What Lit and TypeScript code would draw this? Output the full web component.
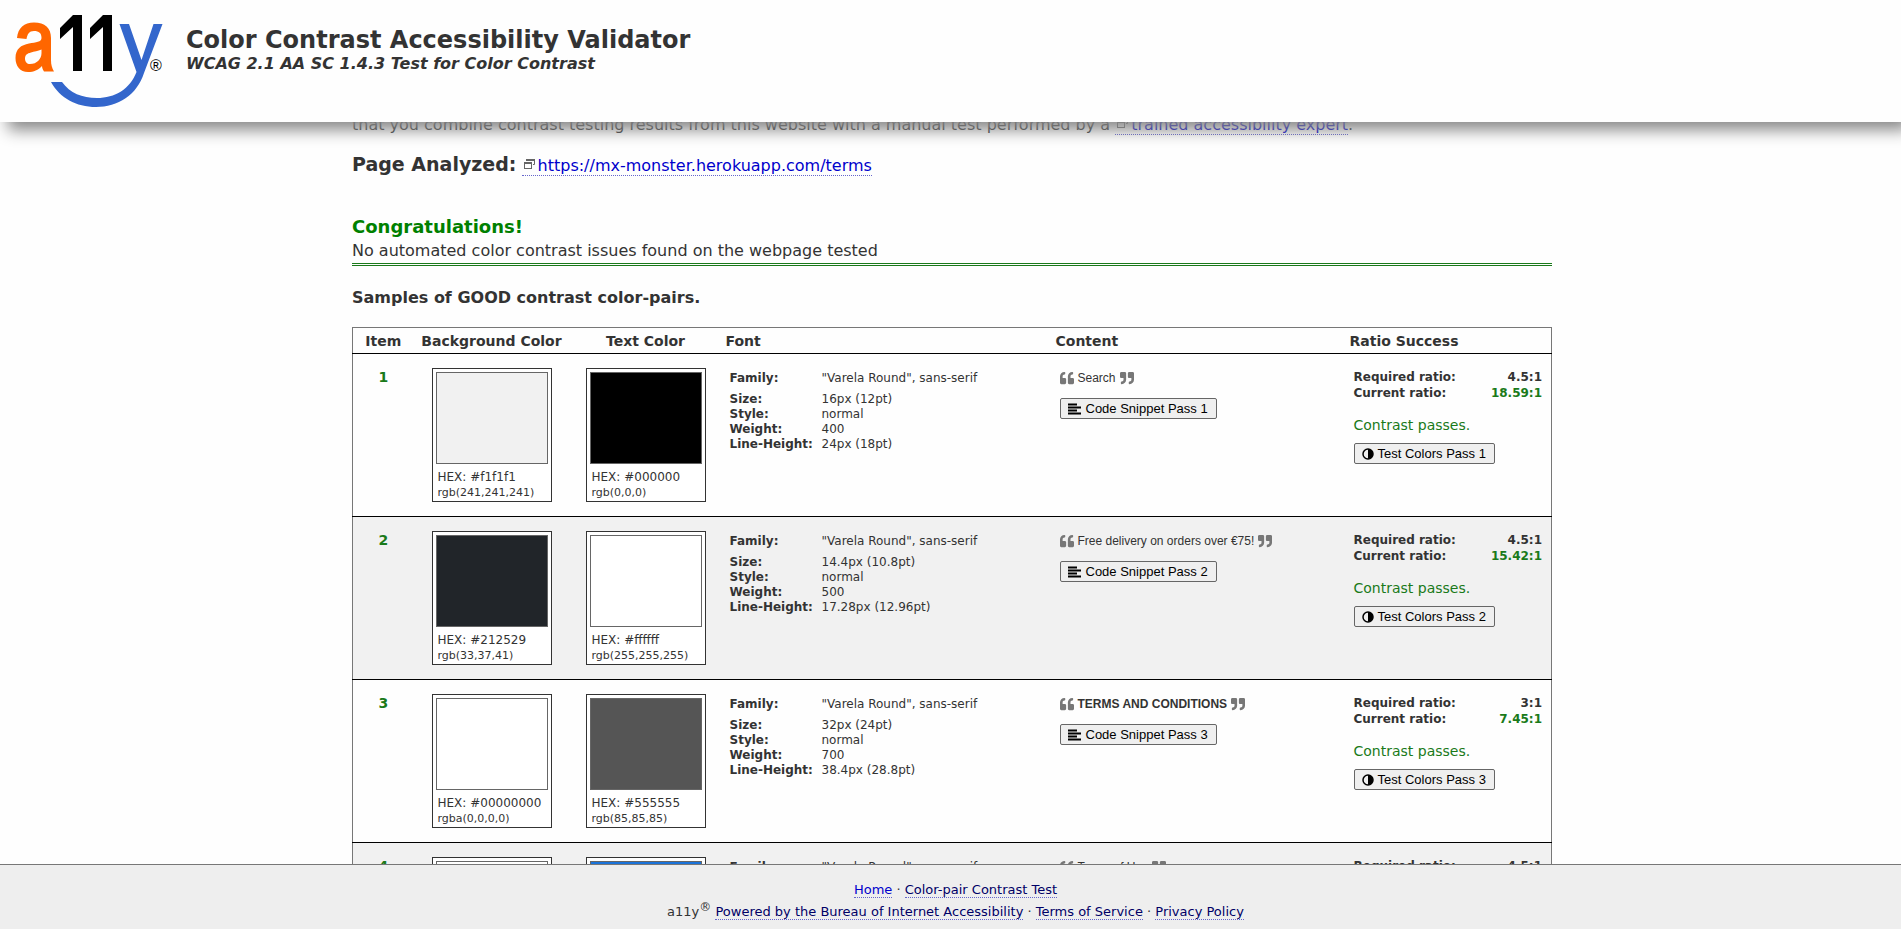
import { LitElement, html, css, svg } from "lit";
import { customElement } from "lit/decorators.js";
import { styleMap } from "lit/directives/style-map.js";

interface Swatch {
  hex: string;
  rgb: string;
  fill: string;
}

interface Sample {
  bg: Swatch;
  text: Swatch;
  size: string;
  weight: string;
  lineHeight: string;
  content: string;
  strong?: boolean;
  required: string;
  current: string;
}

const samples: Sample[] = [
  {
    bg: { hex: "#f1f1f1", rgb: "rgb(241,241,241)", fill: "#f1f1f1" },
    text: { hex: "#000000", rgb: "rgb(0,0,0)", fill: "#000000" },
    size: "16px (12pt)", weight: "400", lineHeight: "24px (18pt)",
    content: "Search", required: "4.5:1", current: "18.59:1",
  },
  {
    bg: { hex: "#212529", rgb: "rgb(33,37,41)", fill: "#212529" },
    text: { hex: "#ffffff", rgb: "rgb(255,255,255)", fill: "#ffffff" },
    size: "14.4px (10.8pt)", weight: "500", lineHeight: "17.28px (12.96pt)",
    content: "Free delivery on orders over €75!", required: "4.5:1", current: "15.42:1",
  },
  {
    bg: { hex: "#00000000", rgb: "rgba(0,0,0,0)", fill: "#ffffff" },
    text: { hex: "#555555", rgb: "rgb(85,85,85)", fill: "#555555" },
    size: "32px (24pt)", weight: "700", lineHeight: "38.4px (28.8pt)",
    content: "TERMS AND CONDITIONS", strong: true, required: "3:1", current: "7.45:1",
  },
  {
    bg: { hex: "#ffffff", rgb: "rgb(255,255,255)", fill: "#ffffff" },
    text: { hex: "#1a73d9", rgb: "rgb(26,115,217)", fill: "#1a73d9" },
    size: "16px (12pt)", weight: "400", lineHeight: "24px (18pt)",
    content: "Terms of Use", required: "4.5:1", current: "4.67:1",
  },
];

const quotePath = svg`<path d="M464 256h-80v-64c0-35.300 28.700-64 64-64h8c13.300 0 24-10.700 24-24V56c0-13.300-10.700-24-24-24h-8c-88.400 0-160 71.600-160 160v240c0 26.500 21.500 48 48 48h128c26.500 0 48-21.500 48-48V304c0-26.500-21.500-48-48-48zm-288 0H96v-64c0-35.300 28.700-64 64-64h8c13.300 0 24-10.700 24-24V56c0-13.300-10.700-24-24-24h-8C71.600 32 0 103.600 0 192v240c0 26.500 21.500 48 48 48h128c26.500 0 48-21.500 48-48V304c0-26.500-21.500-48-48-48z"/>`;

@customElement("app-root")
export class AppRoot extends LitElement {
  static styles = css`
    :host {
      display: block;
      height: 100vh;
      overflow: hidden;
      background: #fefefe;
      color: #333;
      font-family: Verdana, "DejaVu Sans", sans-serif;
      font-size: 16px;
    }
    .shell {
      display: flex;
      flex-direction: column;
      height: 100%;
    }
    .top {
      display: flex;
      align-items: flex-start;
      gap: 24px;
      height: 122px;
      box-sizing: border-box;
      flex: none;
      padding: 12px 15px;
      background: #fefefe;
      box-shadow: 8px 8px 15px 0 #888;
      z-index: 1;
    }
    .logo { width: 147px; height: 96px; flex: none; overflow: visible; }
    .reg { font: 16px "Liberation Sans", sans-serif; }
    h1 { margin: 13px 0 0; font-size: 24px; line-height: 30px; }
    .sub { margin: 0; font-size: 16px; line-height: 18px; font-style: italic; font-weight: bold; }
    main { flex: 1; min-height: 0; overflow: hidden; }
    .wrap { width: 1200px; max-width: 100%; margin: 0 auto; padding-left: 3px; box-sizing: content-box; }
    .intro { margin: -9px 0 0; line-height: 24px; }
    a { color: #00c; text-decoration: none; border-bottom: 1px dotted #66c; }
    .ext { width: 13px; height: 12px; margin: 0 2px 0 1px; vertical-align: 1px; }
    .page { margin: 15px 0 0; line-height: 24px; }
    .page strong { font-size: 19px; }
    h2 { margin: 37px 0 0; font-size: 18px; line-height: 24px; color: #008000; }
    .none { margin: 0; line-height: 24px; border-bottom: 3px double #1a7a1a; }
    h3 { margin: 21px 0 18px; font-size: 16px; line-height: 22px; }
    table.list { width: 100%; border-collapse: collapse; border: 1px solid #777; table-layout: fixed; }
    .list > thead > tr > th { padding: 0 4px; height: 25px; font-size: 14px; text-align: left; border-bottom: 1px solid #000; }
    .list > thead > tr > th.mid { text-align: center; }
    .list > tbody > tr > td { padding: 15px 4px 13px; vertical-align: top; border-bottom: 1px solid #000; font-size: 12px; }
    .list > tbody > tr > td.paint { padding: 14px 4px; }
    .list > tbody > tr:nth-child(even) { background: #f1f1f1; }
    .c1 { width: 61px; } .c2 { width: 156px; } .c3 { width: 152px; } .c4 { width: 330px; } .c5 { width: 294px; }
    .list > tbody > tr > td.num { font-size: 14px; line-height: 16px; font-weight: bold; color: #1a7a1a; text-align: center; }
    .chip { box-sizing: border-box; width: 120px; height: 134px; margin: 0 auto; padding: 3px; border: 1px solid #333; background: #fff; color: #333; }
    .tone { box-sizing: border-box; height: 92px; border: 1px solid #666; }
    .chip p { margin: 0; padding-left: 2px; line-height: 16px; white-space: nowrap; }
    .chip p.hex { padding-top: 5px; }
    .chip p.rgb { font-size: 11px; }
    .facts { display: grid; grid-template-columns: 92px 1fr; margin: 0; padding-left: 4px; line-height: 15px; }
    .facts dt { font-weight: bold; }
    .facts dd { margin: 0; }
    .facts .first { line-height: 18px; padding-bottom: 5px; }
    .quote { display: flex; align-items: center; gap: 4px; margin: 0 0 11px 4px; height: 18px; font-family: "Liberation Sans", Arial, sans-serif; }
    .quote svg { width: 14px; height: 14px; fill: #777; }
    .quote svg.end { transform: rotate(180deg); }
    button { display: inline-flex; align-items: center; gap: 5px; height: 21px; box-sizing: border-box; padding: 0 8px 0 7px; margin: 0 0 0 4px; border: 1px solid #666; border-radius: 2px; background: #efefef; color: #000; font: 13px "Liberation Sans", Arial, sans-serif; white-space: nowrap; }
    button.test { gap: 4px; }
    button svg { flex: none; }
    .ratio { display: grid; grid-template-columns: 1fr auto; margin: 0; padding: 0 5px 0 4px; font-weight: bold; line-height: 16px; }
    .ratio dd { margin: 0; text-align: right; }
    .ok { color: #1a7a1a; }
    .pass { margin: 15px 0 9px 4px; font-size: 14px; line-height: 18px; color: #1a7a1a; }
    footer { flex: none; box-sizing: border-box; height: 65px; padding: 14px 0 0 10px; border-top: 1px solid #777; background: #eee; font-size: 13px; text-align: center; z-index: 1; }
    footer p { margin: 0; line-height: 22px; }
    footer a { color: #006; }
    footer a.home { color: #00c; }
    footer sup { font-size: 12px; line-height: 0; }
  `;

  private ext() {
    return html`<svg class="ext" viewBox="0 0 13 12" aria-hidden="true"><g fill="none" stroke="#666"><path d="M3.500 3V1.500h8v5H10"/><path d="M3 2h9" stroke-width="2"/><rect x="1.500" y="4.500" width="7" height="6" fill="#fff"/><path d="M1 5h8" stroke-width="2"/></g></svg>`;
  }

  private chip(s: Swatch) {
    return html`<div class="chip">
      <div class="tone" style=${styleMap({ background: s.fill })}></div>
      <p class="hex">HEX: ${s.hex}</p>
      <p class="rgb">${s.rgb}</p>
    </div>`;
  }

  private row(s: Sample, n: number) {
    return html`<tr>
      <td class="num">${n}</td>
      <td class="paint">${this.chip(s.bg)}</td>
      <td class="paint">${this.chip(s.text)}</td>
      <td>
        <dl class="facts">
          <dt class="first">Family:</dt><dd class="first">"Varela Round", sans-serif</dd>
          <dt>Size:</dt><dd>${s.size}</dd>
          <dt>Style:</dt><dd>normal</dd>
          <dt>Weight:</dt><dd>${s.weight}</dd>
          <dt>Line-Height:</dt><dd>${s.lineHeight}</dd>
        </dl>
      </td>
      <td>
        <div class="quote">
          <svg viewBox="0 0 512 512" aria-hidden="true">${quotePath}</svg>
          ${s.strong ? html`<strong>${s.content}</strong>` : html`<span>${s.content}</span>`}
          <svg class="end" viewBox="0 0 512 512" aria-hidden="true">${quotePath}</svg>
        </div>
        <button type="button">
          <svg width="13" height="12" viewBox="0 0 13 12" aria-hidden="true"><path d="M0 1.500h9M0 4.500h13M0 7.500h9M0 10.500h13" stroke="#000" stroke-width="2"/></svg>
          Code Snippet Pass ${n}
        </button>
      </td>
      <td>
        <dl class="ratio">
          <dt>Required ratio:</dt><dd>${s.required}</dd>
          <dt>Current ratio:</dt><dd class="ok">${s.current}</dd>
        </dl>
        <p class="pass">Contrast passes.</p>
        <button type="button" class="test">
          <svg width="12" height="12" viewBox="0 0 12 12" aria-hidden="true"><circle cx="6" cy="6" r="5" fill="none" stroke="#000" stroke-width="1.500"/><path d="M6 1a5 5 0 0 1 0 10z"/></svg>
          Test Colors Pass ${n}
        </button>
      </td>
    </tr>`;
  }

  render() {
    return html`<div class="shell">
      <header class="top">
        <svg class="logo" viewBox="15 12 147 96" role="img" aria-label="a11y">
          <path d="M17 38C18 28 24 22.500 34 22.500C45 22.500 51 28 51 38V60C51 65 52 68 54 71.500H44C43 70 42 68 42 66C38 70 34 72 28 72C20 72 15.500 66 15.500 58C15.500 49 21 45 29 43.500C36 42.300 41.500 42 41.500 38C41.500 33 39 31 34 31C29 31 27.500 34 26.500 39ZM41.500 49.500C38 51 34 51.500 31 52.500C27 53.500 25 55 25 58.500C25 62 27 64 30 64C37 64 41.500 59 41.500 53Z" fill="#f60"/>
          <path d="M82 71V15H73L60 28V39L73 27V71Z"/>
          <path d="M112 71V15H103L90 28V39L103 27V71Z"/>
          <path d="M119.500 24H129L141.500 60L153.500 24H162.500L144 73C137 95 118 107 96 107C76 107 60 98 51 82H62C70 93 82 98 97 98C115 98 130 89 136.500 72Z" fill="#36c"/>
          <text class="reg" x="150" y="71">®</text>
        </svg>
        <div>
          <h1>Color Contrast Accessibility Validator</h1>
          <p class="sub">WCAG 2.1 AA SC 1.4.3 Test for Color Contrast</p>
        </div>
      </header>
      <main>
        <div class="wrap">
          <p class="intro">that you combine contrast testing results from this website with a manual test performed by a <a href="#expert">${this.ext()}trained accessibility expert</a>.</p>
          <p class="page"><strong>Page Analyzed:</strong> <a href="#page">${this.ext()}https://mx-monster.herokuapp.com/terms</a></p>
          <h2>Congratulations!</h2>
          <p class="none">No automated color contrast issues found on the webpage tested</p>
          <h3>Samples of GOOD contrast color-pairs.</h3>
          <table class="list">
            <colgroup><col class="c1"><col class="c2"><col class="c3"><col class="c4"><col class="c5"><col></colgroup>
            <thead><tr>
              <th class="mid">Item</th><th class="mid">Background Color</th><th class="mid">Text Color</th><th>Font</th><th>Content</th><th>Ratio Success</th>
            </tr></thead>
            <tbody>${samples.map((s, i) => this.row(s, i + 1))}</tbody>
          </table>
        </div>
      </main>
      <footer>
        <p><a class="home" href="#home">Home</a> · <a href="#pair">Color-pair Contrast Test</a></p>
        <p>a11y<sup>®</sup> <a href="#boia">Powered by the Bureau of Internet Accessibility</a> · <a href="#terms">Terms of Service</a> · <a href="#privacy">Privacy Policy</a></p>
      </footer>
    </div>`;
  }
}
